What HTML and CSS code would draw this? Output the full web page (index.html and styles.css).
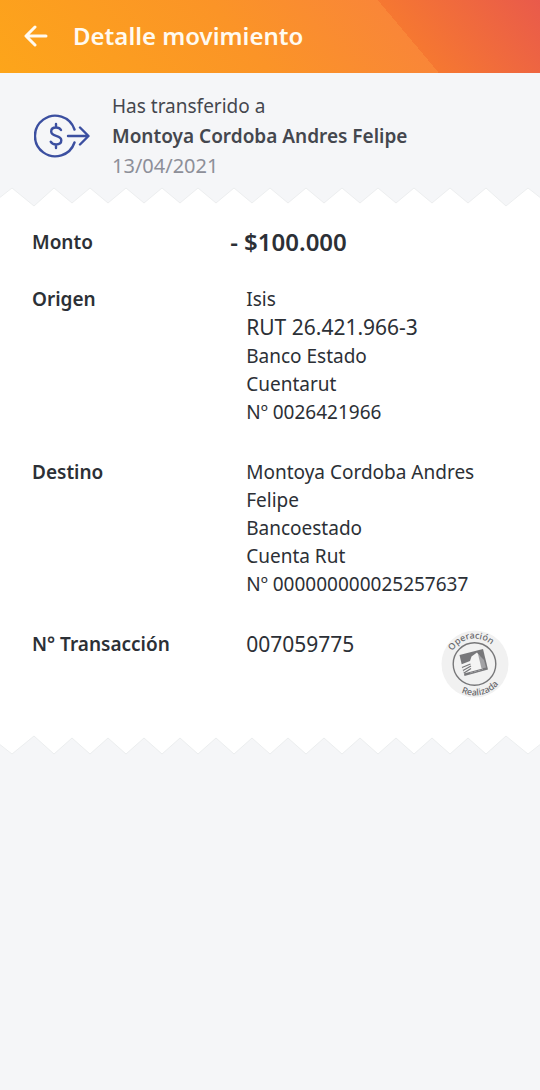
FILE: index.html
```html
<!DOCTYPE html>
<html lang="es">
<head>
<meta charset="utf-8">
<meta name="viewport" content="width=device-width, initial-scale=1">
<title>Detalle movimiento</title>
<link rel="stylesheet" href="styles.css">
</head>
<body>
<header class="topbar">
  <button class="back" type="button" aria-label="Volver">
    <svg width="24" height="24" viewBox="0 0 24 24" fill="none" stroke="currentColor" stroke-width="3" stroke-linecap="round" stroke-linejoin="round"><path d="M22 12H3M11 3L2 12l9 9"/></svg>
  </button>
  <h1 class="title">Detalle movimiento</h1>
</header>
<main>
  <section class="summary">
    <svg class="transfer" width="56" height="44" viewBox="0 0 56 44" fill="none" stroke="currentColor" stroke-width="2.400" stroke-linecap="round" stroke-linejoin="round">
      <path d="M40.500 15.500A20.300 20.300 0 1 0 40.500 28.500"/>
      <path d="M34 22H54M46 13.500l8.500 8.500L46 30.500"/>
      <path d="M22 10v3.500M22 30.500v3.500M27 16c-1-1.700-2.700-2.500-5-2.500-2.800 0-4.800 1.500-4.800 3.900 0 2.600 2.100 3.600 4.900 4.400 2.900.8 5.200 1.800 5.200 4.500 0 2.600-2.200 4.200-5.200 4.200-2.500 0-4.400-1-5.400-2.800"/>
    </svg>
    <div class="who">
      <p>Has transferido a</p>
      <p class="name">Montoya Cordoba Andres Felipe</p>
      <p class="date">13/04/2021</p>
    </div>
  </section>
  <svg class="edge" viewBox="0 0 540 24" preserveAspectRatio="none" aria-hidden="true"><path class="paper" d="M-2 25V15L12 4 34 22 54 4 72 19 90 4 108 19 126 4 144 19 162 4 180 19 198 4 216 19 234 4 252 19 270 4 288 19 306 4 324 19 342 4 360 19 378 4 396 19 414 4 432 19 450 4 468 19 486 4 506 22 528 4 542 15V25Z"/></svg>
  <section class="receipt">
    <dl class="details">
      <div class="row amount"><dt>Monto</dt><dd>- $100.000</dd></div>
      <div class="row"><dt>Origen</dt><dd>Isis<br><span class="number">RUT 26.421.966-3</span><br>Banco Estado<br>Cuentarut<br>Nº 0026421966</dd></div>
      <div class="row"><dt>Destino</dt><dd>Montoya Cordoba Andres Felipe<br>Bancoestado<br>Cuenta Rut<br>Nº 000000000025257637</dd></div>
      <div class="row"><dt>N° Transacción</dt><dd class="number">007059775</dd></div>
    </dl>
    <svg class="stamp" width="68" height="68" viewBox="0 0 68 68" role="img" aria-label="Operación Realizada">
      <defs>
        <path id="arc-top" d="M8 34A25.500 25.500 0 0 1 59 34"/>
        <path id="arc-bottom" d="M2 34A31.500 31.500 0 0 0 65 34"/>
      </defs>
      <circle cx="34" cy="34" r="33.500" fill="#f1f1f1"/>
      <circle cx="33.500" cy="34" r="21.300" fill="none" stroke="#777779" stroke-width="1.400"/>
      <path fill="#77777a" d="M18.500 25L42 19l5 20.500L23.500 46z"/>
      <path fill="#f4f4f4" d="M20 34.500l9-3.500 1.500-4.500L36 22.500l2.500 3.500 3 12.500L23 43.500z"/>
      <path fill="#a2a2a5" d="M37 24l6 6 2 7.500-4.500 1z"/>
      <path fill="none" stroke="#77777a" stroke-width="1.300" d="M21 37.500l8.500-3.500M22 40.500l8-4.500M23 43l7-4.500"/>
      <path fill="none" stroke="#b0b0b3" stroke-width=".7" stroke-dasharray="3 1" d="M29 43l13-3.500"/>
      <text class="stamp-text"><textPath href="#arc-top" startOffset="45%" text-anchor="middle">Operación</textPath></text>
      <text class="stamp-text"><textPath href="#arc-bottom" startOffset="57%" text-anchor="middle">Realizada</textPath></text>
    </svg>
  </section>
  <svg class="edge" viewBox="0 0 540 24" preserveAspectRatio="none" aria-hidden="true"><path class="paper" d="M-2 -1V10L12 21 34 3 54 21 72 5 90 21 108 5 126 21 144 5 162 21 180 5 198 21 216 5 234 21 252 5 270 21 288 5 306 21 324 5 342 21 360 5 378 21 396 5 414 21 432 5 450 21 468 5 486 21 506 3 528 21 542 10V-1Z"/></svg>
</main>
</body>
</html>
```
FILE: styles.css
```css
* { box-sizing: border-box; }
body {
  margin: 0;
  min-height: 100vh;
  background: #f5f6f8;
  color: #2c3036;
  font-family: "Noto Sans", "Open Sans", sans-serif;
  font-size: 19px;
  line-height: 28px;
}
p, h1, dl, dd { margin: 0; }
.topbar {
  display: flex;
  align-items: center;
  gap: 25px;
  height: 73px;
  padding: 0 24px 2px;
  color: #fffaf0;
  background:
    linear-gradient(50deg, #fda51a 0%, #fb9427 45%, #f98638 73%, transparent 73%),
    linear-gradient(50deg, #f77b2e 70%, #e95a4b 100%);
}
.back {
  display: flex;
  padding: 0;
  border: 0;
  background: none;
  color: inherit;
}
.title { font-size: 24px; line-height: 32px; font-weight: 600; }
.summary {
  display: flex;
  align-items: center;
  gap: 22px;
  padding: 18px 34px 3px;
}
.transfer { flex: none; color: #3b4fa0; }
.who { line-height: 30px; color: #44474e; }
.name { font-weight: 600; }
.date { color: #8d8f98; font-size: 20px; }
.edge { display: block; width: 100%; height: 24px; }
.paper { fill: #fff; stroke: #eceeef; stroke-width: 1; }
.receipt {
  position: relative;
  padding: 20px 32px 75px;
  background: #fff;
}
.details { display: grid; gap: 32px; }
.row { display: grid; grid-template-columns: 45% 1fr; }
.amount { margin-bottom: -3px; }
.amount dd { margin-left: -16px; font-size: 24px; font-weight: 600; }
dt { font-weight: 600; }
.number { font-size: 21px; }
.stamp { position: absolute; right: 31px; bottom: 35px; overflow: visible; }
.stamp-text { font-size: 9px; font-weight: 500; fill: #68686c; }
```
